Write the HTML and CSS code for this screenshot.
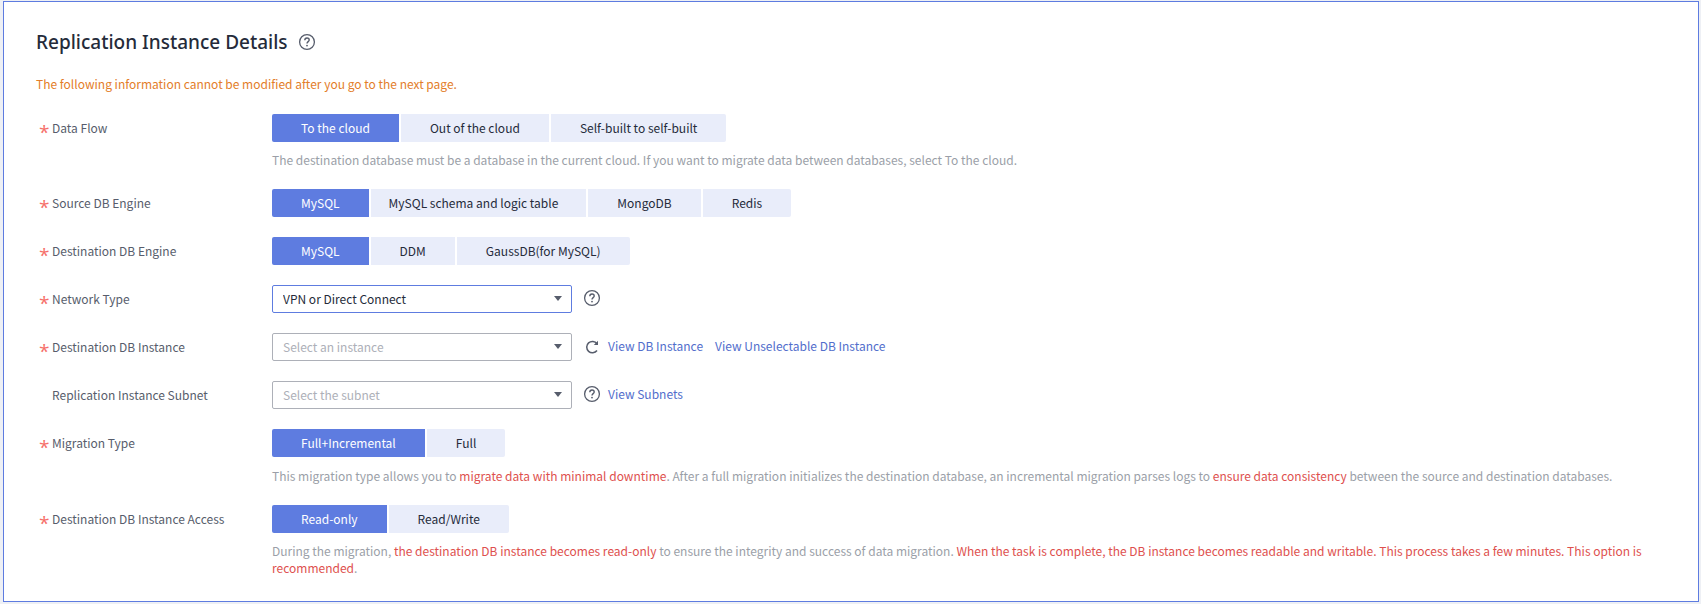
FILE: index.html
```
<!DOCTYPE html>
<html lang="en">
<head>
<meta charset="utf-8">
<title>Replication Instance Details</title>
<link rel="stylesheet" href="styles.css">
</head>
<body>
<svg class="sprite" aria-hidden="true">
  <symbol id="help" viewBox="0 0 18 18">
    <circle cx="9" cy="9" r="7.4" fill="none" stroke="currentColor" stroke-width="1.3"/>
    <path d="M6.8 7.3C6.8 5.9 7.7 5 9 5s2.2.8 2.2 2c0 1.6-2.2 1.7-2.2 3.5" fill="none" stroke="currentColor" stroke-width="1.4"/>
    <circle cx="9" cy="12.6" r=".9" fill="currentColor"/>
  </symbol>
  <symbol id="refresh" viewBox="0 0 18 18">
    <path d="M14 6.7A5.7 5.7 0 1 0 14 13.500" fill="none" stroke="currentColor" stroke-width="1.5"/>
    <path d="M15 3.700v4.200h-4.200z" fill="currentColor"/>
  </symbol>
  <symbol id="caret" viewBox="0 0 8 5"><path d="M0 0h8L4 5z" fill="currentColor"/></symbol>
</svg>
<main class="card">
  <header class="head">
    <h1 class="title">Replication Instance Details</h1>
    <button class="icon-button" type="button" aria-label="Help"><svg class="icon"><use href="#help"/></svg></button>
  </header>
  <p class="notice">The following information cannot be modified after you go to the next page.</p>
  <form class="form">
    <div class="row">
      <span class="label required" id="l-flow">Data Flow</span>
      <div class="field">
        <div class="segments" role="group" aria-labelledby="l-flow">
          <button class="segment selected" type="button">To the cloud</button>
          <button class="segment" type="button">Out of the cloud</button>
          <button class="segment" type="button">Self-built to self-built</button>
        </div>
        <p class="hint">The destination database must be a database in the current cloud. If you want to migrate data between databases, select To the cloud.</p>
      </div>
    </div>
    <div class="row">
      <span class="label required" id="l-source">Source DB Engine</span>
      <div class="field">
        <div class="segments" role="group" aria-labelledby="l-source">
          <button class="segment selected" type="button">MySQL</button>
          <button class="segment long" type="button">MySQL schema and logic table</button>
          <button class="segment" type="button">MongoDB</button>
          <button class="segment" type="button">Redis</button>
        </div>
      </div>
    </div>
    <div class="row">
      <span class="label required" id="l-dest">Destination DB Engine</span>
      <div class="field">
        <div class="segments" role="group" aria-labelledby="l-dest">
          <button class="segment selected" type="button">MySQL</button>
          <button class="segment" type="button">DDM</button>
          <button class="segment" type="button">GaussDB(for MySQL)</button>
        </div>
      </div>
    </div>
    <div class="row">
      <label class="label required" for="network">Network Type</label>
      <div class="field inline">
        <div class="select-box">
          <select class="select focused" id="network"><option>VPN or Direct Connect</option></select>
          <svg class="caret"><use href="#caret"/></svg>
        </div>
        <button class="icon-button" type="button" aria-label="Help"><svg class="icon"><use href="#help"/></svg></button>
      </div>
    </div>
    <div class="row">
      <label class="label required" for="instance">Destination DB Instance</label>
      <div class="field inline">
        <div class="select-box">
          <select class="select empty" id="instance"><option>Select an instance</option></select>
          <svg class="caret"><use href="#caret"/></svg>
        </div>
        <button class="icon-button" type="button" aria-label="Refresh"><svg class="icon"><use href="#refresh"/></svg></button>
        <div class="links"><a class="link" href="#">View DB Instance</a><a class="link" href="#">View Unselectable DB Instance</a></div>
      </div>
    </div>
    <div class="row">
      <label class="label" for="subnet">Replication Instance Subnet</label>
      <div class="field inline">
        <div class="select-box">
          <select class="select empty" id="subnet"><option>Select the subnet</option></select>
          <svg class="caret"><use href="#caret"/></svg>
        </div>
        <button class="icon-button" type="button" aria-label="Help"><svg class="icon"><use href="#help"/></svg></button>
        <div class="links"><a class="link" href="#">View Subnets</a></div>
      </div>
    </div>
    <div class="row">
      <span class="label required" id="l-type">Migration Type</span>
      <div class="field">
        <div class="segments" role="group" aria-labelledby="l-type">
          <button class="segment selected" type="button">Full+Incremental</button>
          <button class="segment" type="button">Full</button>
        </div>
        <p class="hint spaced">This migration type allows you to <em class="alert">migrate data with minimal downtime</em>. After a full migration initializes the destination database, an incremental migration parses logs to <em class="alert">ensure data consistency</em> between the source and destination databases.</p>
      </div>
    </div>
    <div class="row">
      <span class="label required" id="l-access">Destination DB Instance Access</span>
      <div class="field">
        <div class="segments" role="group" aria-labelledby="l-access">
          <button class="segment selected" type="button">Read-only</button>
          <button class="segment" type="button">Read/Write</button>
        </div>
        <p class="hint">During the migration, <em class="alert">the destination DB instance becomes read-only</em> to ensure the integrity and success of data migration. <em class="alert">When the task is complete, the DB instance becomes readable and writable. This process takes a few minutes. This option is recommended</em>.</p>
      </div>
    </div>
  </form>
</main>
</body>
</html>
```
FILE: styles.css
```
* { box-sizing: border-box; }
body {
  margin: 0;
  padding: 1px 2px 2px 3px;
  background: #eef0f5;
  color: #575d6c;
  font: 12px/17px "Noto Sans CJK SC", "Noto Sans", sans-serif;
}
button, select { font: inherit; }
.sprite { display: none; }
.card {
  padding: 24px 40px 24px 32px;
  background: #fff;
  border: 1px solid #5e7ce0;
}
.head { display: flex; align-items: center; gap: 10px; height: 32px; }
.title { margin: 0; color: #252b3a; font-family: "Noto Sans", sans-serif; font-size: 19px; line-height: 32px; font-weight: 500; }
.notice { margin: 17px 0 22px; color: #e37d29; }
.form { display: flex; flex-direction: column; gap: 20px; }
.row { display: grid; grid-template-columns: 236px minmax(0, 1fr); }
.label { padding-left: 16px; line-height: 28px; }
.required::before {
  content: "*";
  display: inline-block;
  width: 13px;
  margin-left: -13px;
  color: #f66f6a;
  font-family: "Open Sans", sans-serif;
  font-size: 19px;
  line-height: 16px;
  vertical-align: -6px;
}
.segments { display: flex; gap: 2px; }
.segment {
  height: 28px;
  padding: 0 29px 2px;
  border: 0;
  background: #e9edfa;
  color: #252b3a;
  white-space: nowrap;
}
.segment.long { padding: 0 28px 2px 18px; }
.segment:first-child { border-radius: 2px 0 0 2px; }
.segment:last-child { border-radius: 0 2px 2px 0; }
.segment.selected { background: #5e7ce0; color: #fff; }
.hint { margin: 9px 0 1px; color: #9b9fa8; }
.hint.spaced { margin-top: 10px; }
.alert { color: #de504e; font-style: normal; }
.inline { display: flex; align-items: center; }
.select-box { display: grid; align-items: center; width: 300px; margin-right: 11px; }
.select {
  grid-area: 1 / 1;
  width: 100%;
  height: 28px;
  padding: 0 28px 2px 10px;
  appearance: none;
  border: 1px solid #adb0b8;
  border-radius: 2px;
  background: #fff;
  color: #252b3a;
}
.select.focused { border-color: #5e7ce0; }
.select.empty { color: #adb0b8; }
.caret {
  grid-area: 1 / 1;
  justify-self: end;
  width: 8px;
  height: 5px;
  margin-right: 10px;
  margin-bottom: 2px;
  color: #575d6c;
  pointer-events: none;
}
.icon-button { display: flex; padding: 0; border: 0; background: none; color: #575d6c; }
.icon { width: 18px; height: 18px; }
.inline .icon-button { margin-bottom: 2px; }
.links { display: flex; gap: 12px; margin: 0 0 3px 7px; }
.link { color: #526ecc; text-decoration: none; }
```
